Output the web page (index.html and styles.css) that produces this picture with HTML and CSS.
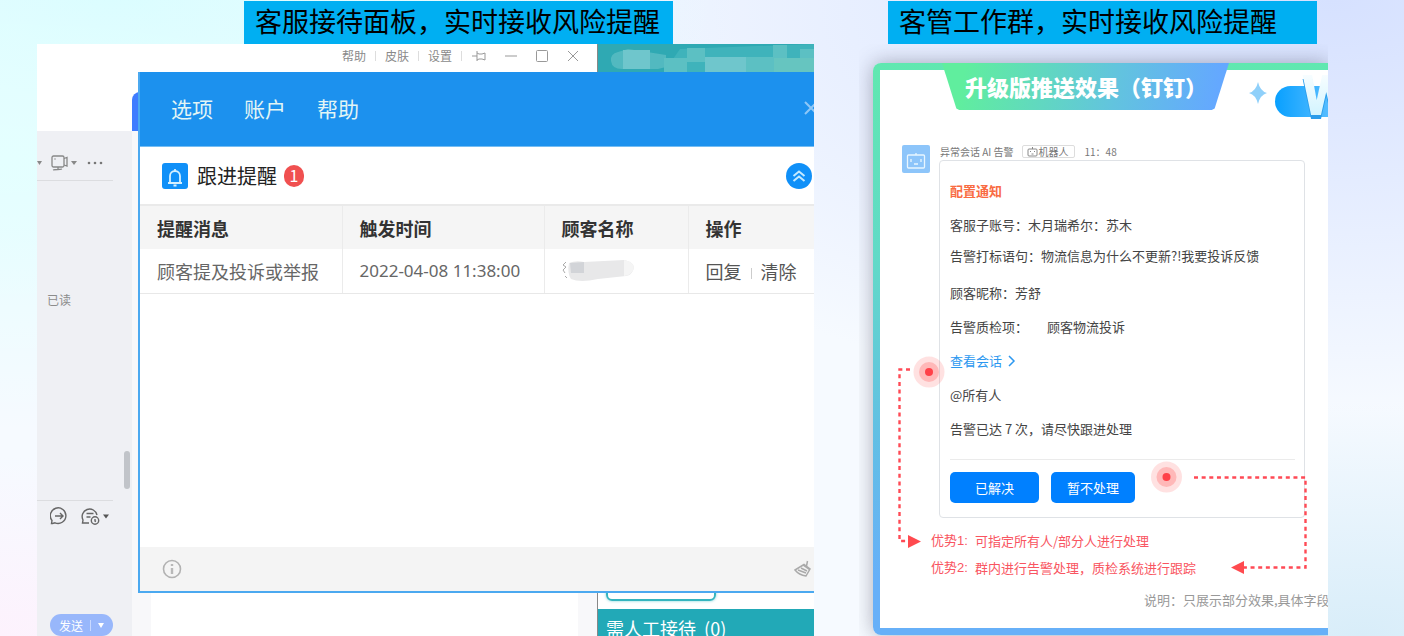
FILE: index.html
```html
<!DOCTYPE html>
<html lang="zh-CN">
<head>
<meta charset="utf-8">
<title>实时接收风险提醒</title>
<link rel="stylesheet" href="styles.css">
</head>
<body>
<main class="slide">
  <section class="column">
    <h2 class="caption">客服接待面板，实时接收风险提醒</h2>
    <div class="desk">
      <div class="app">
        <div class="app-top">
          <nav class="titlebar">
            <button>帮助</button><i class="sep"></i>
            <button>皮肤</button><i class="sep"></i>
            <button>设置</button><i class="sep"></i>
            <button aria-label="固定"><svg width="16" height="14" viewBox="0 0 16 14"><path d="M1 7h5M6 2v10M6 4l2 1h3l3-1v7l-3-1H8l-2 1" class="line"/></svg></button>
            <button aria-label="最小化"><svg width="14" height="14" viewBox="0 0 14 14"><path d="M1 7h12" class="line"/></svg></button>
            <button aria-label="最大化"><svg width="14" height="14" viewBox="0 0 14 14"><rect x="1.500" y="1.500" width="11" height="11" rx="1" class="line"/></svg></button>
            <button aria-label="关闭窗口"><svg width="14" height="14" viewBox="0 0 14 14"><path d="M2 2l10 10M12 2L2 12" class="line"/></svg></button>
          </nav>
          <div class="tabstrip"><span class="active-tab"></span></div>
        </div>
        <div class="app-body">
          <aside class="chat">
            <div class="chat-tools">
              <svg width="5" height="4" viewBox="0 0 5 4"><path d="M0 0h5L2.500 4z" fill="#888"/></svg>
              <svg class="cam" width="26" height="16" viewBox="0 0 26 16"><rect x="1" y="1" width="12" height="11" rx="1.500" class="dark"/><path d="M13 3.500l3-1v8.500l-3-1M2 15c3-1 6 0 9-1M3.500 4h1M7 12v2" class="dark"/><path d="M20 6h6l-3 4z" fill="#888"/></svg>
              <svg width="16" height="4" viewBox="0 0 16 4"><circle cx="2" cy="2" r="1.300" fill="#777"/><circle cx="8" cy="2" r="1.300" fill="#777"/><circle cx="14" cy="2" r="1.300" fill="#777"/></svg>
            </div>
            <div class="messages"><span class="read">已读</span></div>
            <div class="composer">
              <div class="composer-tools">
                <button aria-label="转接"><svg width="18" height="18" viewBox="0 0 18 18"><path d="M2.500 16.500H1.500l.5-3A7.800 7.800 0 1 1 5 15.800zM5 9h8M10 6l3 3-3 3" class="ink"/></svg></button>
                <button aria-label="稍后提醒"><svg width="28" height="18" viewBox="0 0 28 18"><path d="M8 16H1.500l.5-3A7.500 7.500 0 1 1 16 8M5.500 6.500h7M5.500 10h4" class="ink"/><circle cx="14" cy="13.500" r="3.700" class="ink"/><path d="M14 12v2l1 .5" class="ink"/><path d="M22 7.500h6l-3 4z" fill="#555"/></svg></button>
              </div>
              <button class="send">发送<i></i><svg width="6" height="5" viewBox="0 0 6 5"><path d="M0 0h6L3 5z" fill="#fff"/></svg></button>
            </div>
          </aside>
          <div class="rail"><span class="thumb"></span></div>
          <div class="main-pane"></div>
        </div>
      </div>
      <aside class="panel">
        <svg class="mosaic" viewBox="0 0 216 28" preserveAspectRatio="none">
          <rect width="216" height="28" fill="#2fa9b3"/>
          <path d="M82 5L216 0V28H66z" fill="#3fb3bb"/>
          <path d="M20 8Q12 10 13 17Q14 25 24 25L60 25L68 23V11L30 5z" fill="#52b9c0"/>
          <g fill="#6fc6cc"><rect x="25" y="6" width="27" height="19"/><rect x="107" y="13" width="41" height="15"/></g>
          <g fill="#5cc0c3"><rect x="66" y="14" width="23" height="14"/><rect x="89" y="4" width="18" height="14"/><rect x="148" y="13" width="28" height="15"/><rect x="175" y="1" width="14" height="13"/><rect x="202" y="5" width="14" height="23"/></g>
          <rect x="176" y="14" width="40" height="14" fill="#66c5c0"/>
        </svg>
        <div class="panel-foot">
          <div class="panel-box"></div>
          <div class="queue">需人工接待&nbsp; (0)</div>
        </div>
      </aside>

      <section class="dialog">
        <header class="dialog-head">
          <nav><button>选项</button><button>账户</button><button>帮助</button></nav>
          <button class="dialog-close" aria-label="关闭"><svg width="16" height="16" viewBox="0 0 16 16"><path d="M2 2l12 12M14 2L2 14" fill="none" stroke="#8ec7f7" stroke-width="2"/></svg></button>
        </header>
        <div class="dialog-title">
          <svg width="26" height="26" viewBox="0 0 26 26"><rect width="26" height="26" rx="3" fill="#1090f8"/><path d="M6 20h14M8 20v-7a5 5 0 0 1 10 0v7M13 6v2M11.500 22.500h3" fill="none" stroke="#d5f0ff" stroke-width="1.800"/></svg>
          <h3>跟进提醒</h3>
          <span class="badge">1</span>
          <button class="collapse" aria-label="收起"><svg width="26" height="26" viewBox="0 0 26 26"><circle cx="13" cy="13" r="13" fill="#1090f8"/><path d="M7.500 13L13 8.500l5.500 4.500M7.500 18l5.500-4.500 5.500 4.500" fill="none" stroke="#c5eaff" stroke-width="2"/></svg></button>
        </div>
        <table class="alerts">
          <thead><tr><th class="c-msg">提醒消息</th><th class="c-time">触发时间</th><th class="c-name">顾客名称</th><th>操作</th></tr></thead>
          <tbody><tr>
            <td>顾客提及投诉或举报</td><td class="date">2022-04-08 11:38:00</td>
            <td><svg class="smudge" width="74" height="24" viewBox="0 0 74 24"><path d="M4 3l-3 3 3 2-3 3 2 3M3 17l2 2" fill="none" stroke="#aaa"/><path d="M7 4Q14 1 22 3L62 1Q72 3 72 9Q70 16 64 17L36 20Q18 24 9 20Q5 14 7 4z" fill="#e8e8e9"/><path d="M8 4l14-1v11H9z" fill="#d2d4d8"/><path d="M62 1Q72 3 72 9Q70 16 62 17z" fill="#f5f5f5"/></svg></td>
            <td class="ops"><button>回复</button><i></i><button>清除</button></td>
          </tr></tbody>
        </table>
        <footer class="dialog-foot">
          <svg width="20" height="20" viewBox="0 0 20 20"><circle cx="10" cy="10" r="8.500" fill="none" stroke="#b2b2b2" stroke-width="1.600"/><path d="M10 5v2M10 9v6" stroke="#b8b8b8" stroke-width="2.400"/></svg>
          <svg width="18" height="18" viewBox="0 0 18 18"><path d="M1 10l9-5.500 6 4.500-4 7Q5 15 1 10zM9 5l7 5M12.500 6l1-5M4 10l8 3M7 8l6 3" fill="none" stroke="#aaa" stroke-width="1.500"/></svg>
        </footer>
      </section>
    </div>
  </section>

  <section class="column">
    <h2 class="caption caption-right">客管工作群，实时接收风险提醒</h2>
    <div class="push">
      <div class="frame">
        <div class="sheet">
          <div class="sheet-head">
            <h3 class="ribbon">升级版推送效果（钉钉）</h3>
            <svg class="spark" width="18" height="22" viewBox="0 0 18 22"><path d="M9 0Q11 9 18 11Q11 13 9 22Q7 13 0 11Q7 9 9 0z" fill="#8fd0fa"/></svg>
            <div class="pill"><span class="mark">W</span></div>
          </div>
          <div class="post">
            <svg class="avatar" width="28" height="28" viewBox="0 0 28 28"><rect width="28" height="28" rx="2" fill="#8dc5fa"/><rect x="5.500" y="10" width="17" height="13" rx="1" fill="none" stroke="#e8f6ff" stroke-width="1.300"/><path d="M14 10V8M9 14v3M19 14v3M12 19h4" stroke="#e8f6ff" stroke-width="1.300"/></svg>
            <div class="post-main">
              <div class="post-meta">
                <span>异常会话 AI 告警</span>
                <span class="tag"><svg width="11" height="10" viewBox="0 0 11 10"><rect x="1" y="2" width="9" height="7" rx="1" fill="none" stroke="#888"/><path d="M5.500 0v2M3.500 4v1M7.500 4v1M4.500 7h2" stroke="#888"/></svg>机器人</span>
                <time>11：48</time>
              </div>
              <article class="bubble">
                <h4>配置通知</h4>
                <p>客服子账号：木月瑞希尔：苏木</p>
                <p class="quote">告警打标语句：物流信息为什么不更新?!我要投诉反馈</p>
                <p>顾客昵称：芳舒</p>
                <p class="pair"><span>告警质检项：</span><span>顾客物流投诉</span></p>
                <p><a href="#" class="view">查看会话<svg width="8" height="12" viewBox="0 0 8 12"><path d="M1 1l5 5-5 5" fill="none" stroke="#2c98f0" stroke-width="1.500"/></svg></a></p>
                <p>@所有人</p>
                <p>告警已达 7 次，请尽快跟进处理</p>
                <div class="actions"><button class="primary">已解决</button><button class="primary secondary">暂不处理</button></div>
              </article>
            </div>
          </div>
          <dl class="benefits">
            <dt>优势1:</dt><dd>可指定所有人/部分人进行处理</dd>
            <dt>优势2:</dt><dd>群内进行告警处理，质检系统进行跟踪</dd>
          </dl>
          <p class="remark">说明：只展示部分效果,具体字段</p>
        </div>
        <svg class="wires" width="455" height="572" viewBox="873 63 455 572">
          <g fill="none" stroke="#ff4a55" stroke-width="2.400" stroke-dasharray="4 3.650">
            <path d="M910 369.500H899.500V541H906"/><path d="M1194 477.500H1305.500V567.500H1244"/>
          </g>
          <path d="M908 535v13l13-6.500zM1244 561v13l-13-6.500z" fill="#ff4a4f"/>
          <g fill="#ff5a5a"><circle cx="929" cy="372" r="15.500" opacity=".18"/><circle cx="929" cy="372" r="10" opacity=".3"/><circle cx="929" cy="372" r="4" fill="#ff4048"/>
          <circle cx="1166.500" cy="477" r="15.500" opacity=".18"/><circle cx="1166.500" cy="477" r="10" opacity=".3"/><circle cx="1166.500" cy="477" r="4" fill="#ff4048"/></g>
        </svg>
      </div>
    </div>
  </section>
</main>
</body>
</html>
```
FILE: styles.css
```css
* { box-sizing: border-box; }
body, h2, h3, h4, p, dl, dd { margin: 0; }
body {
  font-family: "Noto Sans CJK SC", sans-serif;
  background:
    radial-gradient(ellipse at 0% 25%, #e4ffff 0%, rgba(228, 255, 255, 0) 40%),
    radial-gradient(ellipse at 8% 0%, #d5fcff 0%, rgba(213, 252, 255, 0) 34%),
    radial-gradient(ellipse at 0% 100%, #fdf2fd 0%, rgba(253, 242, 253, 0) 20%),
    radial-gradient(ellipse at 97% 100%, #d8edf9 0%, rgba(216, 237, 249, 0) 26%),
    radial-gradient(ellipse at 95% 0%, #d6e1ff 0%, rgba(214, 225, 255, 0) 46%),
    #f6faff;
}
button { font: inherit; color: inherit; background: none; border: 0; padding: 0; cursor: pointer; white-space: nowrap; }
svg { display: block; flex: none; }

.slide {
  display: grid;
  grid-template-columns: 777fr 469fr;
  gap: 45px;
  min-height: 100vh;
  padding: 1px 76px 0 37px;
  overflow: hidden;
}
.column { display: flex; flex-direction: column; min-width: 0; }
.caption {
  width: 429px;
  margin-left: 207px;
  padding: 0 0 3px 11px;
  background: #00aff2;
  color: #000;
  font-size: 27px;
  line-height: 40px;
  font-weight: 400;
  white-space: nowrap;
}
.caption-right { margin-left: 29px; }

/* desktop client */
.desk { flex: 1; position: relative; display: flex; overflow: hidden; background: #fff; }
.app { width: 560px; display: flex; flex-direction: column; }
.app-top { background: #fff; }
.titlebar {
  height: 28px;
  padding: 0 17px 5px 0;
  display: flex;
  align-items: center;
  justify-content: flex-end;
  gap: 9px;
  font-size: 12px;
  color: #8a8a8a;
}
.titlebar button:nth-last-child(-n+3) { margin-left: 8px; }
.sep { width: 1px; height: 10px; background: #ddd; }
.line { fill: none; stroke: #999; }
.dark { fill: none; stroke: #888; stroke-width: 1.3; }
.ink { fill: none; stroke: #666; stroke-width: 1.4; }
.tabstrip { height: 59px; padding: 20px 0 0 95px; }
.active-tab { display: block; width: 30px; height: 39px; border-radius: 8px 0 0 0; background: #3f7cff; }
.app-body { flex: 1; display: flex; }
.chat { width: 76px; display: flex; flex-direction: column; background: #eff0f4; }
.chat-tools { height: 50px; padding-top: 15px; display: flex; align-items: center; border-bottom: 1px solid #dcdde0; }
.cam { margin: 0 10px 0 9px; }
.messages { flex: 1; padding: 110px 0 0 10px; font-size: 12px; line-height: 18px; color: #8c8c8c; }
.composer { height: 136px; padding: 6px 0 0 13px; border-top: 1px solid #dcdde0; display: flex; flex-direction: column; justify-content: space-between; align-items: flex-start; }
.composer-tools { display: flex; gap: 13px; }
.send { display: flex; align-items: center; gap: 7px; width: 63px; height: 22px; padding-left: 9px; border-radius: 11px; background: #98b7fb; color: #fff; font-size: 12px; }
.send i { width: 1px; height: 11px; background: #c9d9ff; }
.rail { width: 19px; padding: 320px 0 0 11px; background: #eff0f4; }
.thumb { display: block; width: 6px; height: 38px; border-radius: 3px; background: #c1c4c9; }
.main-pane { flex: 1; border: solid #f8f8fa; border-width: 0 19px; }
.panel { flex: 1; display: flex; flex-direction: column; justify-content: space-between; border-left: 1px solid #888; background: #fff; }
.mosaic { width: 100%; height: 28px; }
.panel-box { width: 110px; height: 30px; margin: 0 0 8px 8px; border: 2px solid #35b5bf; border-radius: 6px; box-shadow: 0 0 3px #7ad3d8; }
.queue { height: 27px; padding-left: 8px; overflow: hidden; background: #22a9b7; color: #fff; font-size: 18px; line-height: 38px; }

/* reminder dialog */
.dialog {
  position: absolute;
  top: 28px; left: 101px; right: 0; bottom: 43px;
  display: flex;
  flex-direction: column;
  border: solid #4ba9f0;
  border-width: 0 0 2px 2px;
  background: #fff;
}
.dialog-head { height: 75px; flex: none; padding: 0 0 3px 31px; display: flex; align-items: center; justify-content: space-between; background: #1c91ee; border-bottom: 1px solid #75bdf3; font-size: 21px; color: #e2f5f5; }
.dialog-head nav { display: flex; gap: 31px; }
.dialog-close { margin-right: -5px; }
.dialog-title { height: 57px; flex: none; padding: 0 2px 0 22px; display: flex; align-items: center; }
.dialog-title h3 { margin: 0 7px 0 9px; font-size: 20px; font-weight: 400; color: #222; }
.badge { width: 20px; height: 22px; border-radius: 11px; background: #f05050; color: #fff; text-align: center; font-size: 16px; line-height: 21px; }
.collapse { margin-left: auto; }
.alerts { width: 100%; table-layout: fixed; border-collapse: collapse; font-size: 18px; line-height: 24px; color: #666; }
.c-msg, .c-time { width: 202px; }
.c-name { width: 144px; }
.alerts th, .alerts td { height: 44px; padding: 0 0 0 17px; text-align: left; white-space: nowrap; border-left: 1px solid #ebebeb; }
.alerts th:first-child, .alerts td:first-child { border-left: 0; }
.alerts th { background: #f5f5f5; border-top: 2px solid #eaeaea; font-weight: 700; color: #333; }
.alerts td { border-bottom: 1px solid #e8e8e8; }
.alerts .date { font-family: "Noto Sans", sans-serif; font-size: 17px; }
.ops i { display: inline-block; width: 1px; height: 11px; margin: 0 9px; background: #ccc; }
.ops button { color: #555; }
.dialog-foot { height: 44px; flex: none; margin-top: auto; padding: 0 2px 0 22px; display: flex; align-items: center; justify-content: space-between; background: #f4f4f4; }

/* group push preview */
.push { flex: 1; display: flex; padding: 19px 0 1px 14px; overflow: hidden; }
.frame {
  flex: 1;
  min-width: 0;
  position: relative;
  padding: 7px 0 7px 7px;
  border-radius: 8px 0 0 8px;
  background: linear-gradient(#60e8b0, #62d9c8 35%, #62bfe4 65%, #67b0f8 90%);
  box-shadow: 0 0 20px rgba(60, 60, 80, .4);
}
.sheet { height: 100%; background: #fff; }
.sheet-head { display: flex; height: 75px; padding-left: 62px; align-items: flex-start; }
.ribbon {
  width: 287px;
  height: 47px;
  flex: none;
  margin-top: -7px;
  padding-left: 23px;
  background: linear-gradient(100deg, #60ee9e 8%, #62c4de 60%, #64a8ff 95%);
  clip-path: polygon(0 0, 100% 0, 95% 97%, 94% 100%, 6% 100%, 5% 97%);
  color: #fff;
  font-size: 22px;
  line-height: 47px;
  font-weight: 900;
  white-space: nowrap;
}
.spark { margin: 12px 0 0 20px; }
.pill { flex: 1; min-width: 0; position: relative; height: 31px; margin: 16px 0 0 8px; border-radius: 16px 0 0 16px; background: linear-gradient(90deg, #08a0ff, #55bcff); }
.mark {
  position: absolute;
  left: 27px; top: -20px;
  font-family: Roboto, sans-serif;
  font-size: 56px;
  line-height: 60px;
  font-weight: 900;
  color: transparent;
  background: linear-gradient(#fff, #c8f2ff);
  background-clip: text;
  -webkit-background-clip: text;
  filter: drop-shadow(0 4px 0 #2a9cea);
}
.post { display: flex; gap: 9px; padding: 0 23px 0 22px; }
.post-main { flex: 1; min-width: 0; }
.post-meta { height: 15px; display: flex; align-items: center; gap: 8px; padding: 0 0 2px 1px; font-size: 10px; line-height: 13px; color: #777; white-space: nowrap; }
.tag { display: flex; align-items: center; gap: 1px; padding: 0 5px 0 4px; border: 1px solid #ddd; border-radius: 2px; line-height: 11px; }
.post-meta time { margin-left: 2px; }
.bubble { padding: 13px 9px 14px 10px; border: 1px solid #dfe2e6; border-radius: 4px; font-size: 13px; line-height: 34px; color: #444; white-space: nowrap; }
.bubble h4 { font-size: 13px; font-weight: 700; color: #f96b42; }
.quote { line-height: 28px; margin-bottom: 6px; }
.pair { display: flex; gap: 19px; }
.view { display: inline-flex; align-items: center; gap: 6px; color: #2c98f0; text-decoration: none; }
.actions { display: flex; gap: 12px; margin-top: 13px; padding-top: 12px; border-top: 1px solid #ebebeb; }
.primary { width: 89px; height: 31px; border-radius: 5px; background: #0080ff; color: #fff; line-height: 31px; }
.secondary { width: 84px; }
.benefits { display: grid; grid-template-columns: 44px 1fr; padding: 9px 0 0 51px; font-size: 13px; line-height: 27px; color: #f95561; white-space: nowrap; }
.benefits dt { font-family: "Liberation Sans", "Noto Sans CJK SC", sans-serif; }
.remark { padding: 5px 0 0 264px; font-size: 13px; line-height: 27px; color: #999; white-space: nowrap; overflow: hidden; }
.wires { position: absolute; left: 0; top: 0; }
```
